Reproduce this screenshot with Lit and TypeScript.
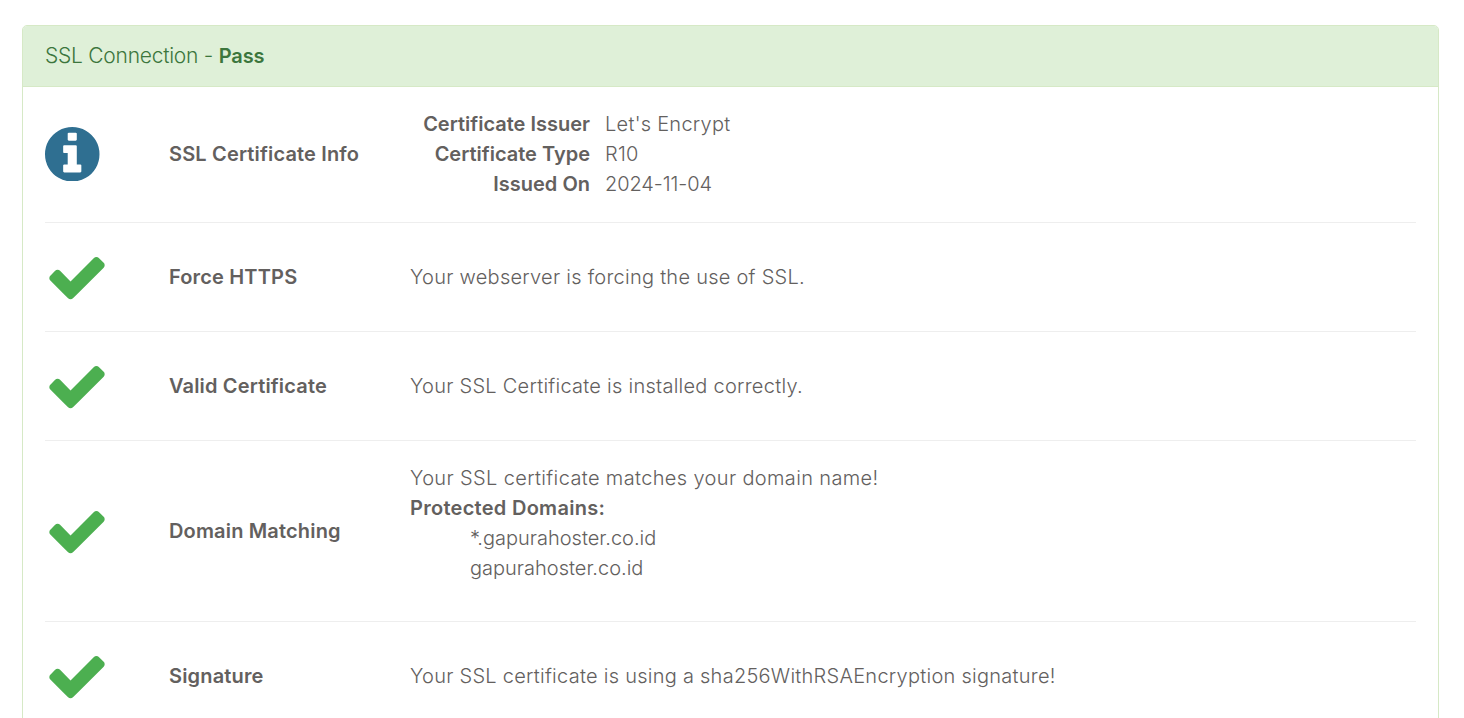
import { LitElement, html, css, svg } from "lit";
import { customElement } from "lit/decorators.js";

const CHECK = svg`<path d="M1671 566q0 40-28 68l-724 724-136 136q-28 28-68 28t-68-28l-136-136-362-362q-28-28-28-68t28-68l136-136q28-28 68-28t68 28l294 295 656-657q28-28 68-28t68 28l136 136q28 28 28 68z"/>`;
const INFO = svg`<path d="M1152 1376v-160q0-14-9-23t-23-9h-96v-512q0-14-9-23t-23-9h-320q-14 0-23 9t-9 23v160q0 14 9 23t23 9h96v320h-96q-14 0-23 9t-9 23v160q0 14 9 23t23 9h448q14 0 23-9t9-23zm-128-896v-160q0-14-9-23t-23-9h-192q-14 0-23 9t-9 23v160q0 14 9 23t23 9h192q14 0 23-9t9-23zm640 416q0 209-103 385.500t-279.500 279.500-385.500 103-385.500-103-279.500-279.500-103-385.500 103-385.500 279.500-279.500 385.500-103 385.500 103 279.500 279.500 103 385.500z"/>`;

@customElement("app-root")
export class AppRoot extends LitElement {
  static styles = css`
    :host {
      display: block;
      height: 718px;
      overflow: hidden;
      background: #fff;
      font-family: "Inter", "Liberation Sans", sans-serif;
      font-size: 20px;
      font-weight: 300;
      line-height: 30px;
      letter-spacing: 0.26px;
      color: #63605e;
    }
    .page { padding: 25px 25px 0 22px; }
    .card {
      border: 1px solid #d6e9c6;
      border-radius: 5px;
      overflow: hidden;
    }
    .head {
      background: #dff0d8;
      border-bottom: 1px solid #d6e9c6;
      color: #3c763d;
      height: 60px;
      padding: 0 22px;
      display: flex;
      align-items: center;
      font-size: 21px;
      letter-spacing: -0.25px;
    }
    .head b { font-weight: 600; white-space: pre; font-size: 20px; letter-spacing: -0.1px; }
    .head span { white-space: pre; }
    .body { padding: 0 22px; }
    .row {
      display: grid;
      grid-template-columns: 124px 241px 1fr;
      align-items: center;
      padding: 22px 0;
      border-bottom: 1px solid #eee;
    }
    .row.first { padding-bottom: 23px; }
    .row:last-child { border-bottom: 0; }
    .ico { display: block; }
    .check { width: 64px; height: 64px; fill: #4caf50; }
    .info { width: 54.5px; height: 54.5px; fill: #2f6f91; }
    .label { font-weight: 600; letter-spacing: 0.16px; }
    .details { display: grid; grid-template-columns: 180px 1fr; column-gap: 15px; }
    .details dt { font-weight: 600; text-align: right; letter-spacing: 0; }
    .details dd { margin: 0; }
    .details dd.date { letter-spacing: -0.1px; }
    dl { margin: 0; }
    .stack { padding-bottom: 16px; }
    .stack > div:first-child { letter-spacing: 0.36px; }
    .stack b { font-weight: 600; display: block; letter-spacing: 0.28px; }
    .domain { margin-left: 60px; letter-spacing: 0; }
  `;

  private check() {
    return html`<svg class="ico check" viewBox="0 0 1792 1792">${CHECK}</svg>`;
  }

  render() {
    return html`
      <div class="page">
        <div class="card">
          <div class="head"><span>SSL Connection - </span><b>Pass</b></div>
          <div class="body">
            <div class="row first">
              <svg class="ico info" viewBox="128 128 1536 1536">${INFO}</svg>
              <div class="label">SSL Certificate Info</div>
              <dl class="details">
                <dt>Certificate Issuer</dt><dd>Let's Encrypt</dd>
                <dt>Certificate Type</dt><dd>R10</dd>
                <dt>Issued On</dt><dd class="date">2024-11-04</dd>
              </dl>
            </div>
            <div class="row">
              ${this.check()}
              <div class="label">Force HTTPS</div>
              <div>Your webserver is forcing the use of SSL.</div>
            </div>
            <div class="row">
              ${this.check()}
              <div class="label">Valid Certificate</div>
              <div>Your SSL Certificate is installed correctly.</div>
            </div>
            <div class="row">
              ${this.check()}
              <div class="label">Domain Matching</div>
              <div class="stack">
                <div>Your SSL certificate matches your domain name!</div>
                <b>Protected Domains:</b>
                <div class="domain">*.gapurahoster.co.id</div>
                <div class="domain">gapurahoster.co.id</div>
              </div>
            </div>
            <div class="row">
              ${this.check()}
              <div class="label">Signature</div>
              <div>Your SSL certificate is using a sha256WithRSAEncryption signature!</div>
            </div>
          </div>
        </div>
      </div>
    `;
  }
}
